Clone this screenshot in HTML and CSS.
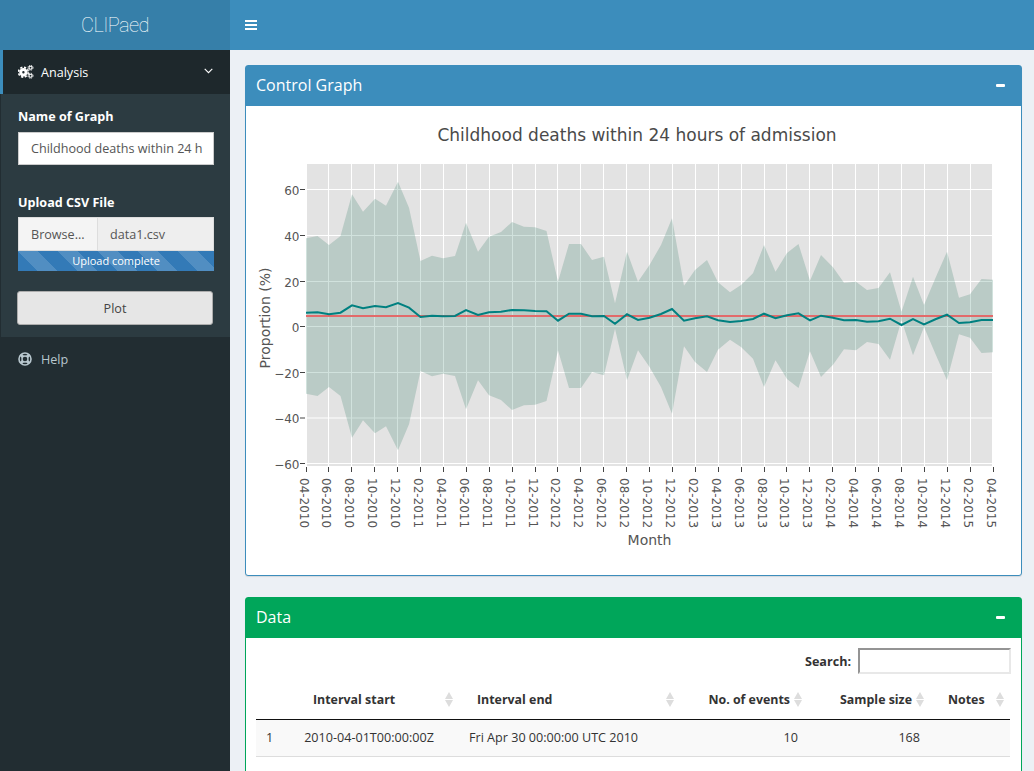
FILE: index.html
```html
<!DOCTYPE html>
<html lang="en">
<head>
<meta charset="utf-8">
<title>CLIPaed</title>
<link rel="stylesheet" href="styles.css">
</head>
<body>
<div class="page">
  <header class="topbar">
    <div class="logo">CLIPaed</div>
    <div class="navbar">
      <svg class="bars" viewBox="0 0 12 10" width="12" height="10"><path d="M0 0h12v2H0zM0 4h12v2H0zM0 8h12v2H0z"/></svg>
    </div>
  </header>
  <div class="main">
    <aside class="sidebar">
      <div class="menu-item active">
        <svg class="menu-icon" viewBox="0 0 16 14" width="16" height="14">
          <g fill="none" stroke="#fff">
            <circle cx="5.4" cy="7.2" r="2.7" stroke-width="3"/>
            <circle cx="5.4" cy="7.2" r="4.9" stroke-width="1.6" stroke-dasharray="2.2 1.65"/>
            <circle cx="12.5" cy="2.7" r="1.5" stroke-width="1.1"/>
            <circle cx="12.5" cy="2.7" r="2.5" stroke-width="1" stroke-dasharray="1.2 .8"/>
            <circle cx="12.5" cy="10.7" r="1.5" stroke-width="1.1"/>
            <circle cx="12.5" cy="10.7" r="2.5" stroke-width="1" stroke-dasharray="1.2 .8"/>
          </g>
        </svg>
        <span class="menu-label">Analysis</span>
        <svg class="chevron" viewBox="0 0 9 6" width="9" height="6"><path d="M.7.9 4.5 4.7 8.3.9" fill="none" stroke="#fff" stroke-width="1.1"/></svg>
      </div>
      <div class="submenu">
        <div class="field-name">
          <div class="field-label">Name of Graph</div>
          <div class="text-input">Childhood deaths within 24 h</div>
        </div>
        <div class="field-upload">
          <div class="field-label">Upload CSV File</div>
          <div class="file-row">
            <div class="browse">Browse...</div>
            <div class="file-name">data1.csv</div>
          </div>
          <div class="progress">Upload complete</div>
        </div>
        <button class="plot-btn" type="button">Plot</button>
      </div>
      <div class="menu-item">
        <svg class="menu-icon" viewBox="0 0 14 14" width="14" height="14">
          <g fill="none" stroke="#b8c7ce">
            <circle cx="7" cy="7" r="6" stroke-width="1.6"/>
            <circle cx="7" cy="7" r="3" stroke-width="1.4"/>
            <path d="M2.8 2.8 5 5M11.2 2.8 9 5M2.8 11.2 5 9M11.2 11.2 9 9" stroke-width="3"/>
          </g>
        </svg>
        <span class="menu-label muted">Help</span>
      </div>
    </aside>
    <main class="content">
      <section class="box box-blue">
        <div class="box-header">
          <h3 class="box-title">Control Graph</h3>
          <span class="minus"></span>
        </div>
        <div class="chart-body">
          <svg class="chart" viewBox="246 106 775 469" width="775" height="469">
            <text class="chart-title" x="637" y="141" text-anchor="middle">Childhood deaths within 24 hours of admission</text>
            <rect x="306" y="164" width="687" height="302" fill="#e3e3e3"/>
            <g stroke="#fff" stroke-width="1">
              <path d="M306 189.5H993M306 235.5H993M306 281.5H993M306 326.5H993M306 372.5H993M306 418H993M306 463.5H993"/>
              <path d="M306.5 164V466M328.5 164V466M351.5 164V466M374.5 164V466M397.5 164V466M420.5 164V466M443.5 164V466M466.5 164V466M489.5 164V466M512.5 164V466M535.5 164V466M557.5 164V466M580.5 164V466M603.5 164V466M626.5 164V466M649.5 164V466M672.5 164V466M695.5 164V466M718.5 164V466M741.5 164V466M764.5 164V466M786.5 164V466M809.5 164V466M832.5 164V466M855.5 164V466M878.5 164V466M901.5 164V466M924.5 164V466M947.5 164V466M970.5 164V466M992.5 164V466"/>
            </g>
            <polygon fill="#005e42" fill-opacity=".18" points="306,238.3 317.5,236 329,245 340.5,236 352,194.3 363,211.7 375,198.7 386,205.7 398,181.7 409,207.7 420.5,261 432,255.7 443,258.3 455,256 466,222.7 478,251.7 489,236.7 501,232 512,222 524,226.7 535,227.3 546.5,231 558,281.7 569,244 581,244 592,260 604,256.7 615,303.3 627,251.7 638,281.7 649.5,265 661,245 672,218.3 684,285.7 695,270 707,260 718,282.3 730,292.3 741,285 753,273.3 764,245 775.5,271.7 787,253 798.5,244 810,280.7 821,255 833,267.3 844,282.7 856,281.7 867,290 878.5,288 890,272.3 901.5,311.7 913,276.7 924,305 936,276.7 947,251.7 959,297.7 970,294.3 981.5,279 993,279.7 993,352.3 981.5,353 970,337.7 959,334.3 947,380.3 936,355.3 924,327 913,355.3 901.5,320.3 890,359.7 878.5,344 867,342 856,350.3 844,349.3 833,364.7 821,377 810,351.3 798.5,388 787,379 775.5,360.3 764,387 753,358.7 741,347 730,339.7 718,349.7 707,372 695,362 684,346.3 672,413.7 661,387 649.5,367 638,350.3 627,380.3 615,328.7 604,375.3 592,372 581,388 569,388 558,350.3 546.5,401 535,404.7 524,405.3 512,410 501,400 489,395.3 478,380.3 466,409.3 455,376 443,373.7 432,376.3 420.5,371 409,424.3 398,450.3 386,426.3 375,433.3 363,420.3 352,437.7 340.5,396 329,387 317.5,396 306,393.7"/>
            <path d="M306 316H993" stroke="#e26a6a" stroke-width="2"/>
            <polyline fill="none" stroke="#008080" stroke-width="2" points="306,312.7 317.5,312.3 329,314.3 340.5,312.7 352,305.3 363,308.3 375,306 386,307.3 398,303 409,307.7 420.5,317 432,315.7 443,316.3 455,316 466,310 478,315 489,312.3 501,311.7 512,310 524,310.3 535,311 546.5,311.3 558,320.7 569,313.7 581,313.7 592,316.3 604,316 615,323.7 627,314.3 638,320 649.5,317.7 661,314 672,309 684,320.7 695,318.3 707,316.3 718,320.3 730,322 741,321 753,319 764,313.7 775.5,318.3 787,315.3 798.5,313.3 810,320.3 821,315.7 833,317.7 844,320.3 856,320 867,321.7 878.5,321.3 890,318.7 901.5,325 913,319 924,324.3 936,319 947,314.7 959,323 970,322.3 981.5,320 993,320"/>
            <g stroke="#444" stroke-width="1">
              <path d="M300 189.5H305M300 235.5H305M300 281.5H305M300 326.5H305M300 372.5H305M300 418H305M300 463.5H305"/>
              <path d="M306.5 467V472M328.5 467V472M351.5 467V472M374.5 467V472M397.5 467V472M420.5 467V472M443.5 467V472M466.5 467V472M489.5 467V472M512.5 467V472M535.5 467V472M557.5 467V472M580.5 467V472M603.5 467V472M626.5 467V472M649.5 467V472M672.5 467V472M695.5 467V472M718.5 467V472M741.5 467V472M764.5 467V472M786.5 467V472M809.5 467V472M832.5 467V472M855.5 467V472M878.5 467V472M901.5 467V472M924.5 467V472M947.5 467V472M970.5 467V472M993.5 467V472"/>
            </g>
            <g class="tick" text-anchor="end">
              <text x="299.5" y="195">60</text>
              <text x="299.5" y="241">40</text>
              <text x="299.5" y="287">20</text>
              <text x="299.5" y="332">0</text>
              <text x="299.5" y="378">−20</text>
              <text x="299.5" y="423">−40</text>
              <text x="299.5" y="469">−60</text>
            </g>
            <g class="tick">
              <text transform="translate(299.5 478) rotate(90)">04-2010</text>
              <text transform="translate(321.5 478) rotate(90)">06-2010</text>
              <text transform="translate(344.5 478) rotate(90)">08-2010</text>
              <text transform="translate(367.5 478) rotate(90)">10-2010</text>
              <text transform="translate(390.5 478) rotate(90)">12-2010</text>
              <text transform="translate(413.5 478) rotate(90)">02-2011</text>
              <text transform="translate(436.5 478) rotate(90)">04-2011</text>
              <text transform="translate(459.5 478) rotate(90)">06-2011</text>
              <text transform="translate(482.5 478) rotate(90)">08-2011</text>
              <text transform="translate(505.5 478) rotate(90)">10-2011</text>
              <text transform="translate(528.5 478) rotate(90)">12-2011</text>
              <text transform="translate(550.5 478) rotate(90)">02-2012</text>
              <text transform="translate(573.5 478) rotate(90)">04-2012</text>
              <text transform="translate(596.5 478) rotate(90)">06-2012</text>
              <text transform="translate(619.5 478) rotate(90)">08-2012</text>
              <text transform="translate(642.5 478) rotate(90)">10-2012</text>
              <text transform="translate(665.5 478) rotate(90)">12-2012</text>
              <text transform="translate(688.5 478) rotate(90)">02-2013</text>
              <text transform="translate(711.5 478) rotate(90)">04-2013</text>
              <text transform="translate(734.5 478) rotate(90)">06-2013</text>
              <text transform="translate(757.5 478) rotate(90)">08-2013</text>
              <text transform="translate(779.5 478) rotate(90)">10-2013</text>
              <text transform="translate(802.5 478) rotate(90)">12-2013</text>
              <text transform="translate(825.5 478) rotate(90)">02-2014</text>
              <text transform="translate(848.5 478) rotate(90)">04-2014</text>
              <text transform="translate(871.5 478) rotate(90)">06-2014</text>
              <text transform="translate(894.5 478) rotate(90)">08-2014</text>
              <text transform="translate(917.5 478) rotate(90)">10-2014</text>
              <text transform="translate(940.5 478) rotate(90)">12-2014</text>
              <text transform="translate(963.5 478) rotate(90)">02-2015</text>
              <text transform="translate(986.5 478) rotate(90)">04-2015</text>
            </g>
            <text class="axis-title" x="649.5" y="545" text-anchor="middle">Month</text>
            <text class="axis-title" transform="translate(270 318) rotate(-90)" text-anchor="middle">Proportion (%)</text>
          </svg>
        </div>
      </section>
      <section class="box box-green">
        <div class="box-header">
          <h3 class="box-title">Data</h3>
          <span class="minus"></span>
        </div>
        <div class="table-body">
          <div class="search-row">
            <span class="search-label">Search:</span>
            <input class="search-input" type="search" aria-label="Search">
          </div>
          <table class="data-table">
            <colgroup>
              <col class="c1"><col class="c2"><col class="c3"><col class="c4"><col class="c5"><col class="c6">
            </colgroup>
            <thead>
              <tr>
                <th></th>
                <th class="th-start">Interval start<svg class="sort" viewBox="0 0 8 15" width="8" height="15"><path d="M4 0 8 7H0zM4 15 0 8h8z"/></svg></th>
                <th class="th-left">Interval end<svg class="sort" viewBox="0 0 8 15" width="8" height="15"><path d="M4 0 8 7H0zM4 15 0 8h8z"/></svg></th>
                <th class="th-right">No. of events<svg class="sort" viewBox="0 0 8 15" width="8" height="15"><path d="M4 0 8 7H0zM4 15 0 8h8z"/></svg></th>
                <th class="th-right">Sample size<svg class="sort" viewBox="0 0 8 15" width="8" height="15"><path d="M4 0 8 7H0zM4 15 0 8h8z"/></svg></th>
                <th class="th-left">Notes<svg class="sort" viewBox="0 0 8 15" width="8" height="15"><path d="M4 0 8 7H0zM4 15 0 8h8z"/></svg></th>
              </tr>
            </thead>
            <tbody>
              <tr class="odd">
                <td>1</td><td class="center">2010-04-01T00:00:00Z</td><td class="center end">Fri Apr 30 00:00:00 UTC 2010</td><td class="right">10</td><td class="right">168</td><td></td>
              </tr>
              <tr class="even">
                <td>2</td><td class="center">2010-05-01T00:00:00Z</td><td class="center end">Mon May 31 00:00:00 UTC 2010</td><td class="right">11</td><td class="right">176</td><td></td>
              </tr>
            </tbody>
          </table>
        </div>
      </section>
    </main>
  </div>
</div>
</body>
</html>
```
FILE: styles.css
```css
* { box-sizing: border-box; }
html, body { margin: 0; height: 771px; overflow: hidden; }
body { font-family: "Open Sans", "Liberation Sans", sans-serif; font-size: 12.6px; color: #333; }
.page { width: 1034px; height: 771px; display: flex; flex-direction: column; background: #ecf0f5; }

.topbar { display: flex; height: 50px; flex: none; }
.logo { width: 230px; background: #367fa9; color: #fff; font-family: "Roboto", sans-serif; font-weight: 100; font-size: 20px; letter-spacing: -.6px; line-height: 50px; text-align: center; }
.navbar { flex: 1; background: #3c8dbc; display: flex; align-items: center; padding-left: 15px; }
.bars { fill: #fff; }

.main { display: flex; flex: 1; min-height: 0; }
.sidebar { width: 230px; flex: none; background: #222d32; }
.menu-item { display: flex; align-items: center; height: 44px; padding-left: 18px; color: #b8c7ce; }
.menu-item.active { background: #1e282c; border-left: 3px solid #3c8dbc; padding-left: 15px; color: #fff; }
.menu-icon { flex: none; }
.menu-label { margin-left: 9px; }
.menu-item.active .menu-label { margin-left: 7px; }
.chevron { margin-left: auto; margin-right: 17px; margin-top: -3px; }

.submenu { background: #2c3b41; height: 243px; padding: 14px 16px 0 17px; border-left: 1px solid #222d32; color: #fff; }
.field-label { font-weight: 700; line-height: 17px; color: #fff; }
.field-name { height: 86px; }
.text-input { margin-top: 7px; width: 196px; height: 33px; background: #fff; border: 1px solid #ccc; padding: 0 12px; line-height: 31px; color: #555; white-space: nowrap; overflow: hidden; }
.field-upload { height: 97px; }
.file-row { display: flex; margin-top: 6px; width: 196px; height: 34px; background: #eee; border: 1px solid #ddd; color: #555; line-height: 33px; }
.browse { width: 79px; background: #f4f4f4; border-right: 1px solid #ddd; padding-left: 12px; flex: none; }
.file-name { padding-left: 12px; }
.progress { width: 196px; height: 20px; font-size: 11px; line-height: 20px; color: #fff; text-align: center; background-color: #337ab7; background-image: linear-gradient(45deg, rgba(255,255,255,.15) 25%, transparent 25%, transparent 50%, rgba(255,255,255,.15) 50%, rgba(255,255,255,.15) 75%, transparent 75%, transparent); background-size: 40px 40px; }
.plot-btn { display: block; width: 196px; height: 34px; margin-left: -1px; background: #e6e6e6; border: 1px solid #adadad; border-radius: 3px; font: inherit; color: #444; padding: 0; }

.content { flex: 1; padding: 15px 12px 0 15px; min-width: 0; overflow: hidden; }
.box { background: #fff; border: 1px solid; border-radius: 3px; box-shadow: 0 1px 1px rgba(0,0,0,.1); }
.box-blue { border-color: #3c8dbc; height: 511px; }
.box-green { border-color: #00a65a; margin-top: 21px; }
.box-header { height: 40px; display: flex; align-items: center; justify-content: space-between; padding: 0 16px 2px 10px; color: #fff; }
.box-blue .box-header { background: #3c8dbc; }
.box-green .box-header { background: #00a65a; }
.box-title { margin: 0; font-size: 16px; font-weight: 400; line-height: 1; }
.minus { width: 9px; height: 3px; background: #fff; border-radius: 1px; }

.chart-body { height: 469px; }
.chart { display: block; }
.chart-title { font-family: "DejaVu Sans", sans-serif; font-size: 17px; fill: #4a4a4a; }
.tick { font-family: "DejaVu Sans", sans-serif; font-size: 12px; fill: #555; }
.axis-title { font-family: "DejaVu Sans", sans-serif; font-size: 14px; fill: #555; }

.table-body { padding: 10px 11px 0 10px; }
.search-row { display: flex; justify-content: flex-end; align-items: center; gap: 7px; height: 26px; }
.search-label { font-weight: 700; color: #333; }
.search-input { width: 153px; height: 26px; margin: 0 -1px 0 0; border: 2px inset #e8e8e8; background: #fff; padding: 0; }
.data-table { width: 754px; margin-top: 6px; border-collapse: collapse; table-layout: fixed; }
.c1 { width: 23px; } .c2 { width: 180px; } .c3 { width: 221px; } .c4 { width: 128px; } .c5 { width: 122px; } .c6 { width: 80px; }
th { position: relative; height: 39px; padding: 0; font-size: 12.4px; font-weight: 700; color: #333; border-bottom: 1px solid #111; text-align: left; white-space: nowrap; }
.th-start { padding-left: 34px; }
.th-left { padding-left: 18px; }
.th-right { padding-right: 18px; text-align: right; }
.sort { position: absolute; right: 6px; top: 12px; fill: #ddd; }
td { height: 37px; padding: 0 10px; border-bottom: 1px solid #ddd; color: #333; white-space: nowrap; }
tr.odd td { background: #f9f9f9; }
tr.even td { height: 41px; }
.center { text-align: center; }
td.end { padding-right: 46px; }
.right { text-align: right; }
```
